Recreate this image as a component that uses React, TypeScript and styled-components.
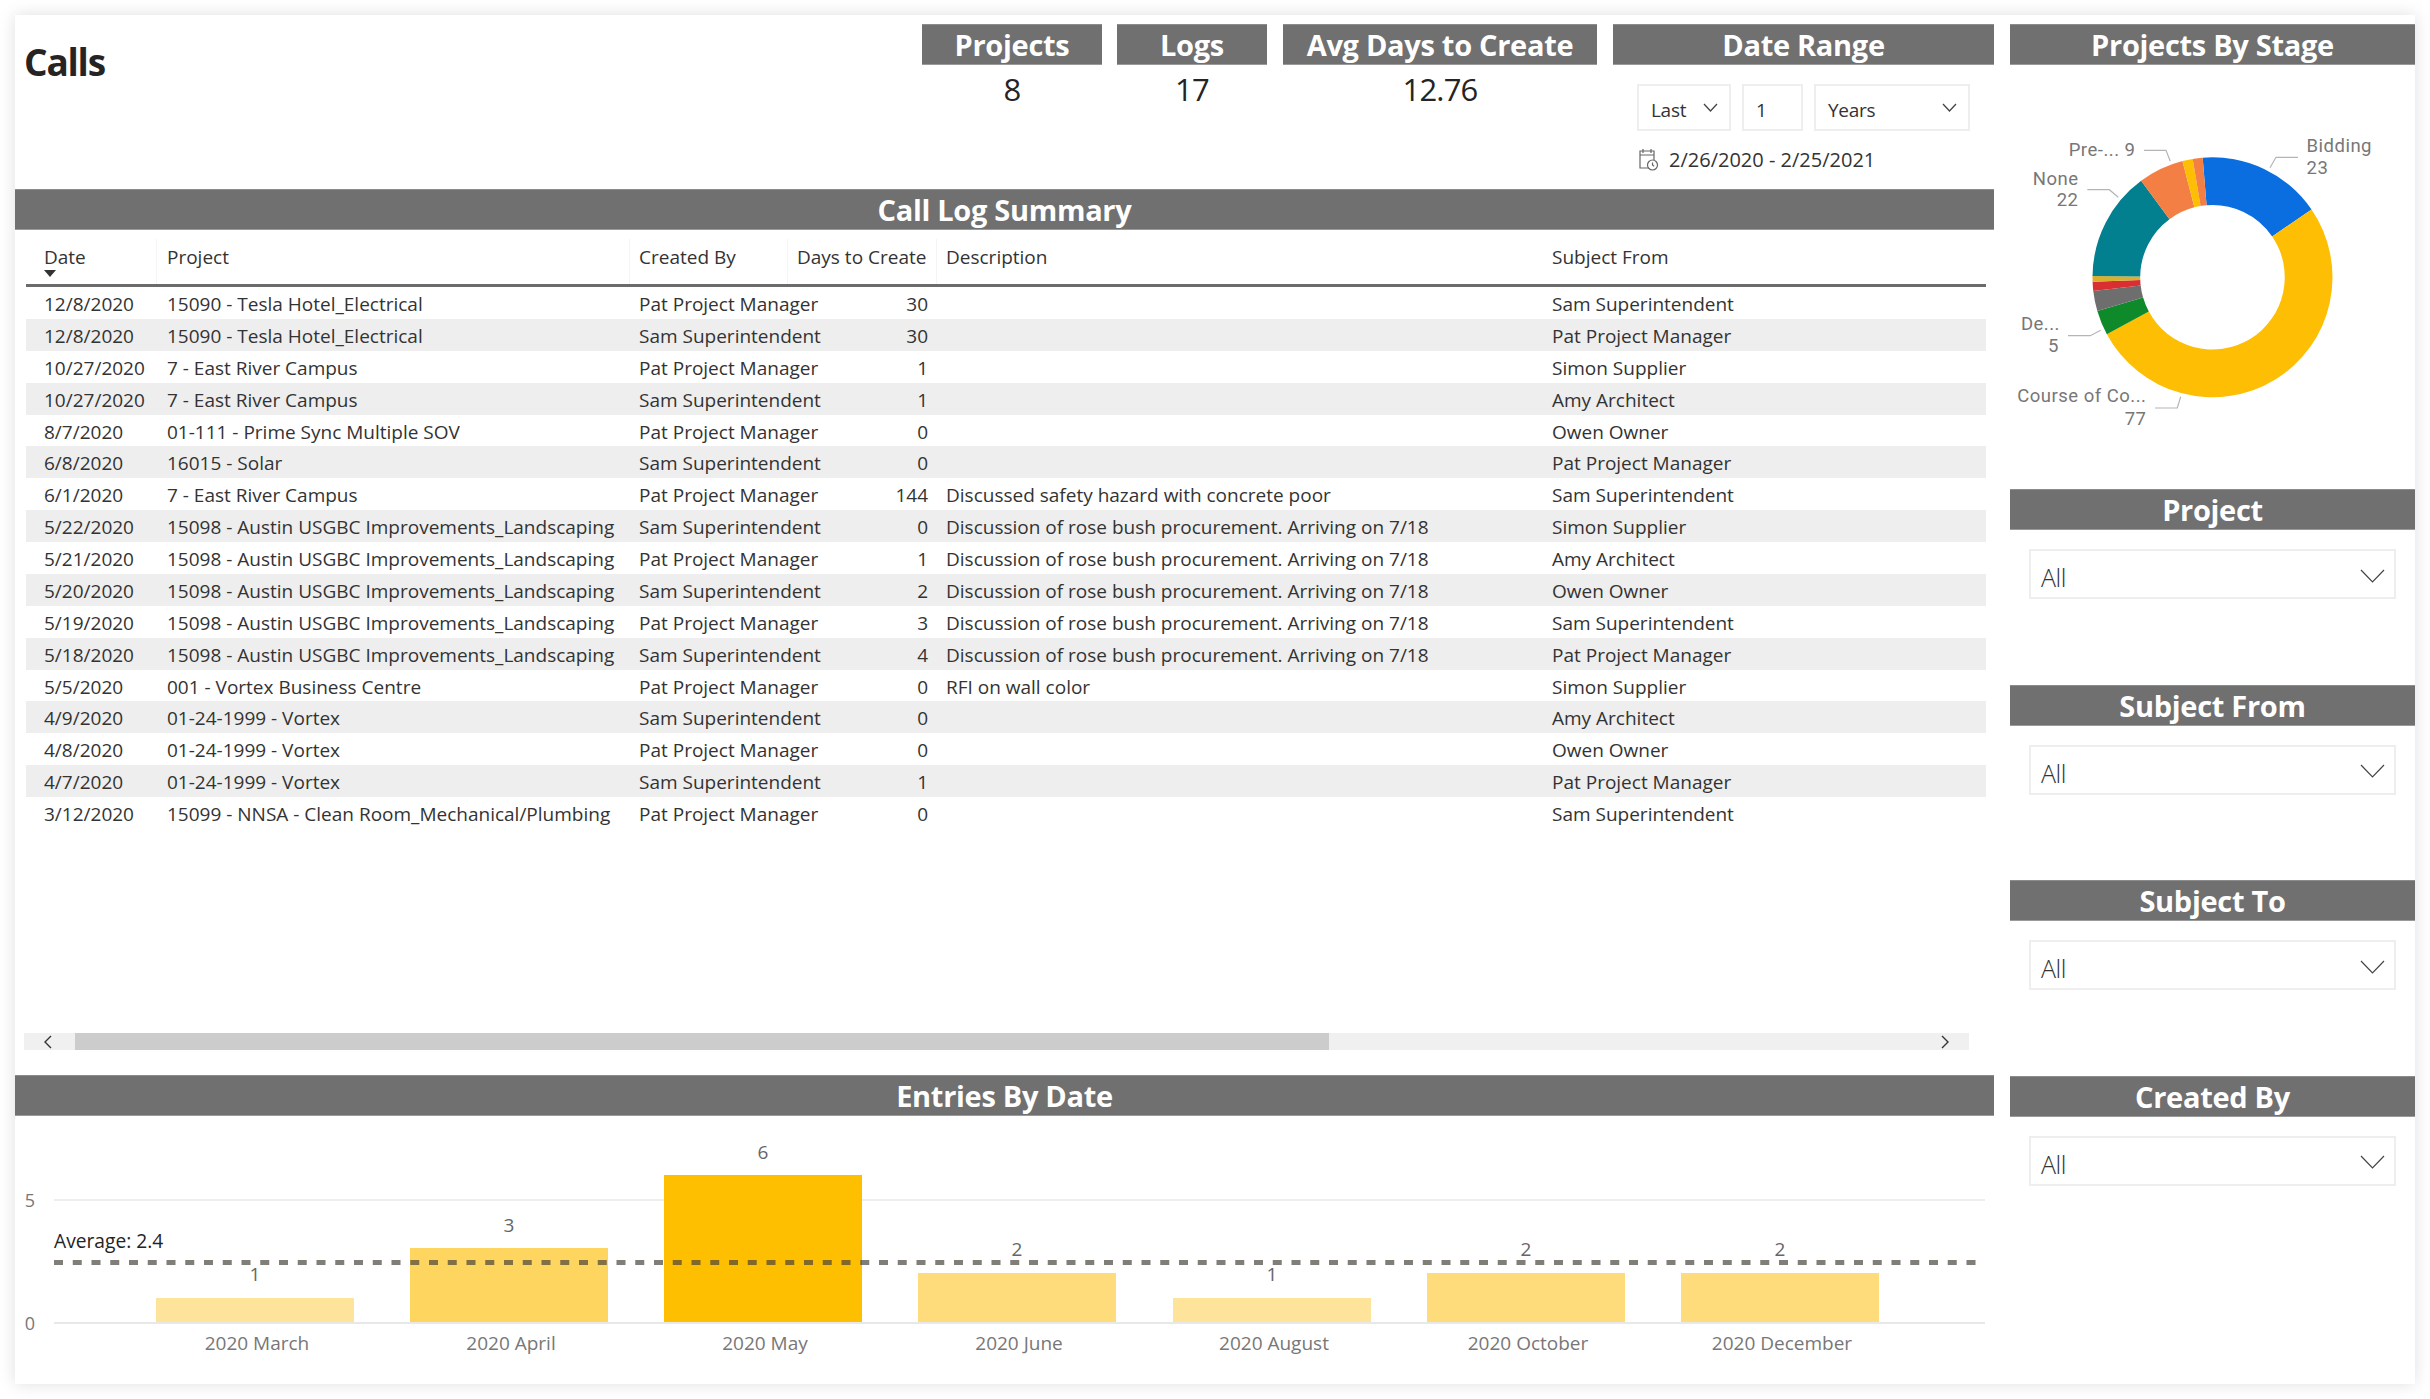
import React from 'react';
import styled, { createGlobalStyle } from 'styled-components';

const GlobalStyle = createGlobalStyle`
  html, body {
    margin: 0;
    padding: 0;
    background: #ffffff;
  }
  body {
    font-family: "Open Sans", "Noto Sans", sans-serif;
    color: #333333;
  }
`;

const Page = styled.div`
  width: 2430px;
  height: 1399px;
  padding: 15px;
  box-sizing: border-box;
  overflow: hidden;
`;

const Canvas = styled.div`
  width: 2400px;
  height: 1369px;
  box-sizing: border-box;
  padding-top: 9px;
  background: #ffffff;
  box-shadow: 0 0 16px rgba(0, 0, 0, 0.13);
  display: grid;
  grid-template-columns: 1979px 405px;
  column-gap: 16px;
`;

const MainColumn = styled.div`
  display: flex;
  flex-direction: column;
  min-width: 0;
`;

const SideColumn = styled.div`
  display: flex;
  flex-direction: column;
  min-width: 0;
`;

const TopStrip = styled.div`
  height: 165px;
  display: flex;
  align-items: flex-start;
`;

const Title = styled.h1`
  flex: 1;
  margin: 16px 0 0 9px;
  font-size: 37px;
  line-height: 44px;
  font-weight: 700;
  letter-spacing: -1.2px;
  color: #252423;
`;

const Heading = styled.div`
  height: 41px;
  box-sizing: border-box;
  background: #707070;
  border-top: 1px solid #8c8c8c;
  border-bottom: 1px solid #9a9a9a;
  color: #ffffff;
  font-size: 29px;
  font-weight: 700;
  line-height: 40px;
  letter-spacing: -0.3px;
  text-align: center;
  white-space: nowrap;
`;

const Kpi = styled.div<{ $width: number; $gap: number }>`
  width: ${p => p.$width}px;
  margin-right: ${p => p.$gap}px;
`;

const KpiValue = styled.div`
  margin-top: 3px;
  font-size: 31px;
  line-height: 42px;
  letter-spacing: -0.8px;
  text-align: center;
  color: #252423;
`;

const DateRangeCard = styled.div`
  width: 381px;
`;

const RangeControls = styled.div`
  display: flex;
  margin: 19px 0 0 24px;
  gap: 11px;
`;

const RangeBox = styled.div<{ $width: number }>`
  width: ${p => p.$width}px;
  height: 47px;
  box-sizing: border-box;
  border: 2px solid #eeeeee;
  padding: 9px 0 0 12px;
  display: flex;
  justify-content: space-between;
  font-size: 19px;
  line-height: 30px;
  letter-spacing: -0.3px;
  color: #333333;
`;

const RangeChevron = styled.svg`
  width: 15px;
  height: 9px;
  margin: 8px 11px 0 0;
  fill: none;
  stroke: #444444;
  stroke-width: 1.3;
`;

const RangeDates = styled.div`
  display: flex;
  align-items: center;
  gap: 10px;
  margin: 15px 0 0 25px;
  font-size: 20px;
  line-height: 28px;
`;

const CalendarIcon = styled.svg`
  width: 21px;
  height: 24px;
  fill: #ffffff;
  stroke: #666666;
  stroke-width: 1.2;
`;

const TablePanel = styled.div`
  height: 886px;
  display: flex;
  flex-direction: column;
`;

const TableArea = styled.div`
  flex: 1;
  padding: 9px 8px 0 11px;
`;

const columns = '131px 473px 158px 149px 605px 444px';

const HeaderRow = styled.div`
  display: grid;
  grid-template-columns: ${columns};
  height: 45px;
  border-bottom: 3px solid #6b6b6b;
`;

const HeaderCell = styled.div<{ $pad?: number; $divider?: boolean }>`
  padding-left: ${p => p.$pad ?? 10}px;
  border-right: ${p => (p.$divider ? '1px solid #f4f4f4' : 'none')};
  font-size: 19px;
  line-height: 36px;
  color: #333333;
  white-space: nowrap;
`;

const SortArrow = styled.div`
  width: 0;
  height: 0;
  margin-top: -5px;
  border-left: 6.5px solid transparent;
  border-right: 6.5px solid transparent;
  border-top: 7px solid #333333;
`;

const DataRow = styled.div<{ $striped: boolean }>`
  display: grid;
  grid-template-columns: ${columns};
  height: 31.875px;
  background: ${p => (p.$striped ? '#eeeeee' : 'transparent')};
`;

const DataCell = styled.div<{ $pad?: number; $right?: boolean }>`
  padding: 1px ${p => (p.$right ? 9 : 0)}px 0 ${p => p.$pad ?? 10}px;
  text-align: ${p => (p.$right ? 'right' : 'left')};
  font-size: 19px;
  line-height: 32px;
  color: #333333;
  white-space: nowrap;
`;

const ScrollBar = styled.div`
  width: 1945px;
  height: 17px;
  margin: 0 0 25px 9px;
  background: #f0f0f0;
  display: flex;
  align-items: center;
`;

const ScrollEnd = styled.div`
  width: 51px;
  display: flex;
  padding-left: 19px;
  box-sizing: border-box;
`;

const ScrollThumb = styled.div`
  width: 1254px;
  height: 17px;
  background: #cccccc;
`;

const ScrollRest = styled.div`
  flex: 1;
  display: flex;
  justify-content: flex-end;
  padding-right: 19px;
`;

const ScrollArrow = styled.svg`
  width: 10px;
  height: 14px;
  fill: none;
  stroke: #333333;
  stroke-width: 1.4;
`;

const ChartPanel = styled.div`
  height: 309px;
`;

const ChartSvg = styled.svg`
  display: block;
  width: 1979px;
  height: 268px;
  font-family: "Open Sans", "Noto Sans", sans-serif;
`;

const DonutPanel = styled.div`
  height: 465px;
`;

const DonutSvg = styled.svg`
  display: block;
  width: 405px;
  height: 424px;
  font-family: Roboto, "Noto Sans", sans-serif;
`;

const SlicerPanel = styled.div`
  height: 195.5px;
`;

const Dropdown = styled.div`
  height: 50px;
  margin: 19px 19px 0 19px;
  box-sizing: border-box;
  border: 2px solid #eeeeee;
  padding: 6px 9px 0 10px;
  display: flex;
  justify-content: space-between;
  align-items: center;
  font-size: 25px;
  font-weight: 300;
  letter-spacing: -0.4px;
  color: #333333;
`;

const DropdownChevron = styled.svg`
  width: 25px;
  height: 14px;
  margin-top: -3px;
  fill: none;
  stroke: #444444;
  stroke-width: 1.2;
`;

const rows = [
  ['12/8/2020', '15090 - Tesla Hotel_Electrical', 'Pat Project Manager', '30', '', 'Sam Superintendent'],
  ['12/8/2020', '15090 - Tesla Hotel_Electrical', 'Sam Superintendent', '30', '', 'Pat Project Manager'],
  ['10/27/2020', '7 - East River Campus', 'Pat Project Manager', '1', '', 'Simon Supplier'],
  ['10/27/2020', '7 - East River Campus', 'Sam Superintendent', '1', '', 'Amy Architect'],
  ['8/7/2020', '01-111 - Prime Sync Multiple SOV', 'Pat Project Manager', '0', '', 'Owen Owner'],
  ['6/8/2020', '16015 - Solar', 'Sam Superintendent', '0', '', 'Pat Project Manager'],
  ['6/1/2020', '7 - East River Campus', 'Pat Project Manager', '144', 'Discussed safety hazard with concrete poor', 'Sam Superintendent'],
  ['5/22/2020', '15098 - Austin USGBC Improvements_Landscaping', 'Sam Superintendent', '0', 'Discussion of rose bush procurement. Arriving on 7/18', 'Simon Supplier'],
  ['5/21/2020', '15098 - Austin USGBC Improvements_Landscaping', 'Pat Project Manager', '1', 'Discussion of rose bush procurement. Arriving on 7/18', 'Amy Architect'],
  ['5/20/2020', '15098 - Austin USGBC Improvements_Landscaping', 'Sam Superintendent', '2', 'Discussion of rose bush procurement. Arriving on 7/18', 'Owen Owner'],
  ['5/19/2020', '15098 - Austin USGBC Improvements_Landscaping', 'Pat Project Manager', '3', 'Discussion of rose bush procurement. Arriving on 7/18', 'Sam Superintendent'],
  ['5/18/2020', '15098 - Austin USGBC Improvements_Landscaping', 'Sam Superintendent', '4', 'Discussion of rose bush procurement. Arriving on 7/18', 'Pat Project Manager'],
  ['5/5/2020', '001 - Vortex Business Centre', 'Pat Project Manager', '0', 'RFI on wall color', 'Simon Supplier'],
  ['4/9/2020', '01-24-1999 - Vortex', 'Sam Superintendent', '0', '', 'Amy Architect'],
  ['4/8/2020', '01-24-1999 - Vortex', 'Pat Project Manager', '0', '', 'Owen Owner'],
  ['4/7/2020', '01-24-1999 - Vortex', 'Sam Superintendent', '1', '', 'Pat Project Manager'],
  ['3/12/2020', '15099 - NNSA - Clean Room_Mechanical/Plumbing', 'Pat Project Manager', '0', '', 'Sam Superintendent'],
];

const bars = [
  { label: '2020 March', value: 1, x: 156, top: 1298, color: '#fee49a', labelY: 1281 },
  { label: '2020 April', value: 3, x: 410, top: 1248, color: '#fdd55f', labelY: 1232 },
  { label: '2020 May', value: 6, x: 664, top: 1175, color: '#fdbf00', labelY: 1159 },
  { label: '2020 June', value: 2, x: 918, top: 1273, color: '#fedc7c', labelY: 1256 },
  { label: '2020 August', value: 1, x: 1173, top: 1298, color: '#fee49a', labelY: 1281 },
  { label: '2020 October', value: 2, x: 1427, top: 1273, color: '#fedc7c', labelY: 1256 },
  { label: '2020 December', value: 2, x: 1681, top: 1273, color: '#fedc7c', labelY: 1256 },
];

const slices = [
  { from: -4.7, to: 55.6, color: '#0a6de0' },
  { from: 55.6, to: 241.7, color: '#fdbe03' },
  { from: 241.7, to: 253.7, color: '#0e8a2a' },
  { from: 253.7, to: 263.5, color: '#6e6e6e' },
  { from: 263.5, to: 267.9, color: '#d92f32' },
  { from: 267.9, to: 270.6, color: '#d9b02e' },
  { from: 270.6, to: 323.5, color: '#028090' },
  { from: 323.5, to: 345.5, color: '#f47f44' },
  { from: 345.5, to: 350.5, color: '#fdbe03' },
  { from: 350.5, to: 355.3, color: '#f47f44' },
];

// centre and radii of the donut, in page coordinates
const CX = 2212.5;
const CY = 277.3;
const OUTER = 120;
const INNER = 72.3;

const polar = (r: number, deg: number) => {
  const a = (deg * Math.PI) / 180;
  return `${(CX + r * Math.sin(a)).toFixed(2)} ${(CY - r * Math.cos(a)).toFixed(2)}`;
};

const slicePath = (from: number, to: number) => {
  const large = to - from > 180 ? 1 : 0;
  return `M${polar(OUTER, from)} A${OUTER} ${OUTER} 0 ${large} 1 ${polar(OUTER, to)} L${polar(INNER, to)} A${INNER} ${INNER} 0 ${large} 0 ${polar(INNER, from)} Z`;
};

const leaders = [
  '2270 167.7 L2276 157.3 L2298 157.3',
  '2118.3 197.3 L2109.3 189.7 L2087.3 189.7',
  '2170.3 161.3 L2166 150.3 L2144 150.3',
  '2100.7 330.3 L2090.3 335.7 L2068 335.7',
  '2180.7 396.7 L2177.3 408 L2155 408',
];

const donutLabels = [
  { text: 'Bidding', x: 2306.5, y: 152, anchor: 'start' },
  { text: '23', x: 2306.5, y: 174, anchor: 'start' },
  { text: 'Pre-... 9', x: 2135.5, y: 156, anchor: 'end' },
  { text: 'None', x: 2078.5, y: 184.5, anchor: 'end' },
  { text: '22', x: 2078.5, y: 206, anchor: 'end' },
  { text: 'De...', x: 2060, y: 330, anchor: 'end' },
  { text: '5', x: 2059, y: 351.5, anchor: 'end' },
  { text: 'Course of Co...', x: 2146.5, y: 401.5, anchor: 'end' },
  { text: '77', x: 2146.5, y: 424.5, anchor: 'end' },
];

const slicers = ['Project', 'Subject From', 'Subject To', 'Created By'];

const Chevron = () => (
  <DropdownChevron viewBox="0 0 25 14">
    <polyline points="1,1 12.5,13 24,1" />
  </DropdownChevron>
);

const SmallChevron = () => (
  <RangeChevron viewBox="0 0 15 9">
    <polyline points="1,1 7.5,8 14,1" />
  </RangeChevron>
);

const App = () => (
  <Page>
    <GlobalStyle />
    <Canvas>
      <MainColumn>
        <TopStrip>
          <Title>Calls</Title>
          <Kpi $width={180} $gap={15}>
            <Heading>Projects</Heading>
            <KpiValue>8</KpiValue>
          </Kpi>
          <Kpi $width={150} $gap={16}>
            <Heading>Logs</Heading>
            <KpiValue>17</KpiValue>
          </Kpi>
          <Kpi $width={314} $gap={16}>
            <Heading>Avg Days to Create</Heading>
            <KpiValue>12.76</KpiValue>
          </Kpi>
          <DateRangeCard>
            <Heading>Date Range</Heading>
            <RangeControls>
              <RangeBox $width={94}>Last<SmallChevron /></RangeBox>
              <RangeBox $width={61}>1</RangeBox>
              <RangeBox $width={156}>Years<SmallChevron /></RangeBox>
            </RangeControls>
            <RangeDates>
              <CalendarIcon viewBox="0 0 21 24">
                <path d="M2 3h14v17H2zM2 7h14M5 1v4M13 1v4" fill="none" />
                <circle cx="14.5" cy="17" r="5" />
                <path d="M14.5 14.5V17l1.6 1.2" fill="none" />
              </CalendarIcon>
              2/26/2020 - 2/25/2021
            </RangeDates>
          </DateRangeCard>
        </TopStrip>

        <TablePanel>
          <Heading>Call Log Summary</Heading>
          <TableArea>
            <HeaderRow>
              <HeaderCell $pad={18} $divider>
                Date
                <SortArrow />
              </HeaderCell>
              <HeaderCell $divider>Project</HeaderCell>
              <HeaderCell $pad={9} $divider>Created By</HeaderCell>
              <HeaderCell $pad={9} $divider>Days to Create</HeaderCell>
              <HeaderCell $pad={9}>Description</HeaderCell>
              <HeaderCell>Subject From</HeaderCell>
            </HeaderRow>
            {rows.map((row, i) => (
              <DataRow key={i} $striped={i % 2 === 1}>
                <DataCell $pad={18}>{row[0]}</DataCell>
                <DataCell>{row[1]}</DataCell>
                <DataCell $pad={9}>{row[2]}</DataCell>
                <DataCell $right>{row[3]}</DataCell>
                <DataCell $pad={9}>{row[4]}</DataCell>
                <DataCell>{row[5]}</DataCell>
              </DataRow>
            ))}
          </TableArea>
          <ScrollBar>
            <ScrollEnd>
              <ScrollArrow viewBox="0 0 10 14">
                <polyline points="8,1 2,7 8,13" />
              </ScrollArrow>
            </ScrollEnd>
            <ScrollThumb />
            <ScrollRest>
              <ScrollArrow viewBox="0 0 10 14">
                <polyline points="2,1 8,7 2,13" />
              </ScrollArrow>
            </ScrollRest>
          </ScrollBar>
        </TablePanel>

        <ChartPanel>
          <Heading>Entries By Date</Heading>
          <ChartSvg viewBox="15 1116 1979 268">
            <line x1="54" y1="1200" x2="1985" y2="1200" stroke="#eeeeee" strokeWidth="2" />
            <line x1="54" y1="1323" x2="1985" y2="1323" stroke="#e8e8e8" strokeWidth="2" />
            <text x="30" y="1206.5" fontSize="18" textAnchor="middle" fill="#777777">5</text>
            <text x="30" y="1329.5" fontSize="18" textAnchor="middle" fill="#777777">0</text>
            {bars.map(b => (
              <rect key={b.label} x={b.x} y={b.top} width={198} height={1322 - b.top} fill={b.color} />
            ))}
            <line x1="54" y1="1262.5" x2="1977" y2="1262.5" stroke="rgba(70, 64, 56, 0.68)" strokeWidth="5" strokeDasharray="9 9.75" />
            <text x="54" y="1247.5" fontSize="19.2" fill="#252423">Average: 2.4</text>
            {bars.map(b => (
              <React.Fragment key={b.label}>
                <text x={b.x + 99} y={b.labelY} fontSize="19" textAnchor="middle" fill="#666666">{b.value}</text>
                <text x={b.x + 101} y="1349.5" fontSize="19" textAnchor="middle" fill="#777777">{b.label}</text>
              </React.Fragment>
            ))}
          </ChartSvg>
        </ChartPanel>
      </MainColumn>

      <SideColumn>
        <DonutPanel>
          <Heading>Projects By Stage</Heading>
          <DonutSvg viewBox="2010 65 405 424">
            {slices.map(s => (
              <path key={s.from} d={slicePath(s.from, s.to)} fill={s.color} />
            ))}
            {leaders.map(d => (
              <path key={d} d={`M${d}`} fill="none" stroke="#b5b5b5" strokeWidth="1.2" />
            ))}
            {donutLabels.map(l => (
              <text
                key={l.text}
                x={l.x}
                y={l.y}
                fontSize="18.5"
                letterSpacing="0.5"
                textAnchor={l.anchor as 'start' | 'end'}
                fill="#777777"
              >
                {l.text}
              </text>
            ))}
          </DonutSvg>
        </DonutPanel>
        {slicers.map(name => (
          <SlicerPanel key={name}>
            <Heading>{name}</Heading>
            <Dropdown>
              All
              <Chevron />
            </Dropdown>
          </SlicerPanel>
        ))}
      </SideColumn>
    </Canvas>
  </Page>
);

export default App;
